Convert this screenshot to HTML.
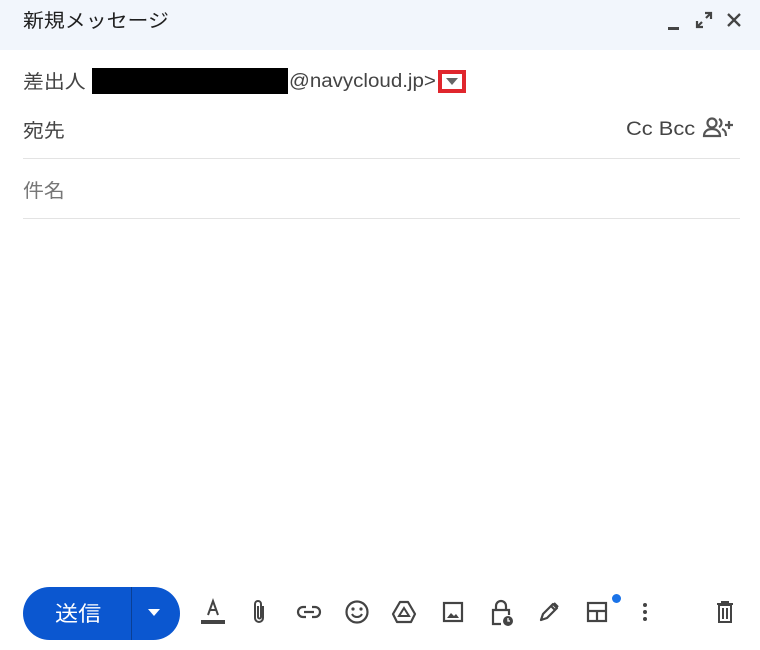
<!DOCTYPE html>
<html><head><meta charset="utf-8"><style>
*{margin:0;padding:0;box-sizing:border-box}
body{width:760px;height:650px;background:#fff;font-family:"Liberation Sans","Noto Sans CJK JP",sans-serif;position:relative;overflow:hidden;color:#444}
.a{position:absolute}
.t{font-size:19px;transform-origin:0 0;transform:scaleX(1.1);white-space:nowrap}
.hd{left:0;top:0;width:760px;height:50px;background:#f2f6fc}
.ln{height:1px;background:#e3e3e3;left:23px;width:717px}
svg{position:absolute}
</style></head><body>
<div class="a hd"></div>
<div class="a t" style="left:23px;top:6px;color:#1f1f1f">新規メッセージ</div>
<div class="a" style="left:668px;top:27px;width:11px;height:3px;background:#444"></div>
<svg style="left:695px;top:11px" width="18" height="18" viewBox="0 0 18 18"><path d="M10 2h6v6M16 2l-5 5M8 16H2v-6M2 16l5-5" stroke="#444" stroke-width="2.2" fill="none"/></svg>
<svg style="left:726px;top:12px" width="16" height="16" viewBox="0 0 16 16"><path d="M2 2l12 12M14 2L2 14" stroke="#444" stroke-width="2.3"/></svg>
<div class="a t" style="left:23px;top:67px">差出人</div>
<div class="a" style="left:92px;top:68px;width:196px;height:26px;background:#000"></div>
<div class="a t" style="left:289px;top:71px;transform:scaleX(1.08)">@navycloud.jp&gt;</div>
<div class="a" style="left:438px;top:70px;width:28px;height:23px;background:#e0262d"></div>
<div class="a" style="left:442px;top:74px;width:20px;height:15px;background:#fff"></div>
<svg style="left:446px;top:78px" width="12" height="7"><path d="M0 0h12L6 7z" fill="#666"/></svg>
<div class="a t" style="left:23px;top:116px">宛先</div>
<div class="a t" style="left:626px;top:119px;transform:scaleX(1.15)">Cc Bcc</div>
<svg style="left:702px;top:116px" width="32" height="22" viewBox="0 0 32 22"><circle cx="10" cy="7" r="4.5" fill="none" stroke="#555" stroke-width="2.2"/><path d="M2 20c0-5 4-7 8-7s8 2 8 7z" fill="none" stroke="#555" stroke-width="2.2"/><path d="M17 3a4.5 4.5 0 010 8M20 13c3 1 4 3 4 7" fill="none" stroke="#555" stroke-width="2.2"/><path d="M27 5v8M23 9h8" stroke="#555" stroke-width="2.2"/></svg>
<div class="a ln" style="top:158px"></div>
<div class="a t" style="left:23px;top:176px;color:#777">件名</div>
<div class="a ln" style="top:218px"></div>
<div class="a" style="left:23px;top:587px;width:157px;height:53px;border-radius:27px;background:#0b57d0"></div>
<div class="a" style="left:131px;top:587px;width:1px;height:53px;background:#0a3f94"></div>
<div class="a t" style="left:55px;top:598px;color:#fff;font-size:21px">送信</div>
<svg style="left:148px;top:609px" width="12" height="7"><path d="M0 0h12L6 7z" fill="#fff"/></svg>
<svg style="left:200px;top:597px" width="26" height="30" viewBox="0 0 26 30"><path d="M8 18L13 4l5 14M9.5 13h7" stroke="#444" stroke-width="2" fill="none"/><rect x="1" y="23" width="24" height="4" fill="#444"/></svg>
<svg style="left:250px;top:598px" width="18" height="28" viewBox="0 0 18 28"><path d="M13 8v12a4 4 0 01-8 0V6a3 3 0 016 0v13a1.5 1.5 0 01-3 0V8" stroke="#444" stroke-width="2" fill="none"/></svg>
<svg style="left:296px;top:602px" width="26" height="20" viewBox="0 0 26 20"><path d="M10 5H7a5 5 0 000 10h3M16 5h3a5 5 0 010 10h-3M8 10h10" stroke="#444" stroke-width="2.2" fill="none"/></svg>
<svg style="left:344px;top:599px" width="26" height="26" viewBox="0 0 26 26"><circle cx="13" cy="13" r="10.5" stroke="#444" stroke-width="2.2" fill="none"/><circle cx="9" cy="10" r="1.6" fill="#444"/><circle cx="17" cy="10" r="1.6" fill="#444"/><path d="M8 15c2 4 8 4 10 0" stroke="#444" stroke-width="2" fill="none"/></svg>
<svg style="left:391px;top:600px" width="26" height="24" viewBox="0 0 26 24"><path d="M9 2h8l7 12-4 8H6l-4-8z" stroke="#444" stroke-width="2.2" fill="none" stroke-linejoin="round"/><path d="M13 8l5 8H8z" stroke="#444" stroke-width="2" fill="none"/></svg>
<svg style="left:442px;top:601px" width="22" height="22" viewBox="0 0 22 22"><rect x="2" y="2" width="18" height="18" stroke="#444" stroke-width="2.2" fill="none"/><path d="M5 17l4-5 3 3 2-2 3 4z" fill="#444"/></svg>
<svg style="left:489px;top:598px" width="26" height="30" viewBox="0 0 26 30"><path d="M7 12V8a5 5 0 0110 0v4" stroke="#444" stroke-width="2.2" fill="none"/><path d="M12 26H4V12h16v5" stroke="#444" stroke-width="2.2" fill="none"/><circle cx="19" cy="23" r="5" fill="#444"/><path d="M19 20v3h2" stroke="#fff" stroke-width="1.3" fill="none"/></svg>
<svg style="left:537px;top:600px" width="24" height="24" viewBox="0 0 24 24"><path d="M4 20l2-6L16 4l4 4-10 10zM14 6l4 4M17 3l4 4" stroke="#444" stroke-width="2.2" fill="none" stroke-linejoin="round"/></svg>
<svg style="left:586px;top:601px" width="22" height="22" viewBox="0 0 22 22"><rect x="2" y="2" width="18" height="18" stroke="#444" stroke-width="2.2" fill="none"/><path d="M2 10h18M11 10v10" stroke="#444" stroke-width="2.2"/></svg>
<div class="a" style="left:612px;top:594px;width:9px;height:9px;border-radius:50%;background:#1a73e8"></div>
<div class="a" style="left:643px;top:603px;width:4px;height:4px;border-radius:50%;background:#444;box-shadow:0 7px 0 #444,0 14px 0 #444"></div>
<svg style="left:715px;top:600px" width="20" height="24" viewBox="0 0 20 24"><path d="M2 4h16M7 4V2h6v2M4 5h12v17H4z M8 8v11M12 8v11" stroke="#444" stroke-width="2" fill="none"/></svg>
</body></html>
